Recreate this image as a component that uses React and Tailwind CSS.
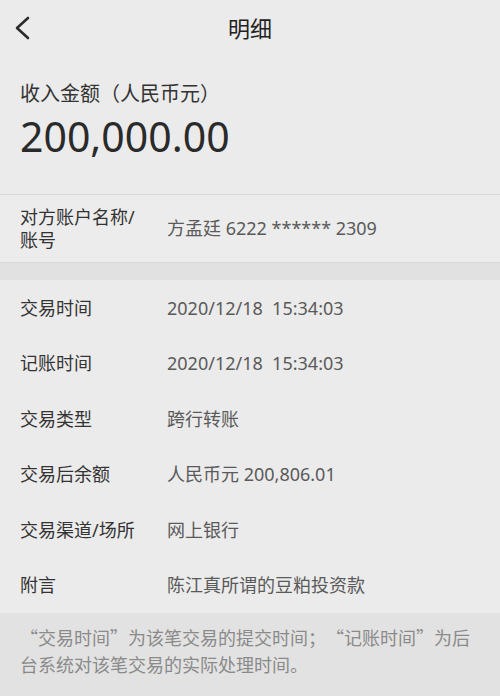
import React from "react";

const cjk = { fontFamily: '"Noto Sans CJK SC", "Noto Sans", sans-serif' };

const rows = [
  { label: "交易时间", value: "2020/12/18\u00a0\u00a015:34:03" },
  { label: "记账时间", value: "2020/12/18\u00a0\u00a015:34:03" },
  { label: "交易类型", value: "跨行转账" },
  { label: "交易后余额", value: "人民币元 200,806.01" },
  { label: "交易渠道/场所", value: "网上银行" },
  { label: "附言", value: "陈江真所谓的豆粕投资款" },
];

export default function App() {
  return (
    <div
      className="w-[500px] h-[696px] overflow-hidden bg-[#ebebeb] flex flex-col [text-spacing-trim:space-all]"
      style={{ fontFamily: '"Noto Sans", "Noto Sans CJK SC", sans-serif' }}
    >
      {/* 顶部导航 */}
      <div className="relative h-[56px] flex items-center justify-center">
        <svg
          className="absolute left-[14px] top-[16px]"
          width="18"
          height="24"
          viewBox="0 0 18 24"
          fill="none"
        >
          <polyline
            points="14,2 3,12 14,22"
            stroke="#2a2a2a"
            strokeWidth="2.6"
            strokeLinecap="round"
            strokeLinejoin="round"
          />
        </svg>
        <span className="text-[22px] leading-[30px] text-[#222]">明细</span>
      </div>

      {/* 金额 */}
      <div className="px-[20px] pt-[23px] pb-[34px] border-b border-[#d6d6d6]">
        <div className="text-[20px] leading-[28px] text-[#333]" style={cjk}>
          收入金额（人民币元）
        </div>
        <div className="mt-[5px] text-[41px] leading-[48px] text-[#2a2a2a]">
          200,000.00
        </div>
      </div>

      {/* 对方账户 */}
      <div className="flex items-center h-[67px] px-[20px] bg-[#ececec]">
        <div className="w-[147px] pr-[18px] text-[18px] leading-[23px] text-[#333]">
          对方账户名称/账号
        </div>
        <div className="text-[18px] leading-[23px] text-[#5a5a5a]">
          方孟廷 6222 ****** 2309
        </div>
      </div>

      <div className="h-[18px] bg-[#e1e1e1] border-t border-[#d9d9d9]" />

      {/* 明细行 */}
      <div className="flex flex-col">
        {rows.map((r) => (
          <div key={r.label} className="flex items-center h-[55.5px] px-[20px]">
            <div className="w-[147px] text-[18px] leading-[24px] text-[#333]">
              {r.label}
            </div>
            <div className="text-[18px] leading-[24px] text-[#5a5a5a]">
              {r.value}
            </div>
          </div>
        ))}
      </div>

      {/* 说明 */}
      <div
        className="flex-1 bg-[#e2e2e2] px-[20px] pt-[11px] text-[18px] leading-[27px] text-[#8a8a8a]"
        style={cjk}
      >
        “交易时间”为该笔交易的提交时间；“记账时间”为后台系统对该笔交易的实际处理时间。
      </div>
    </div>
  );
}
